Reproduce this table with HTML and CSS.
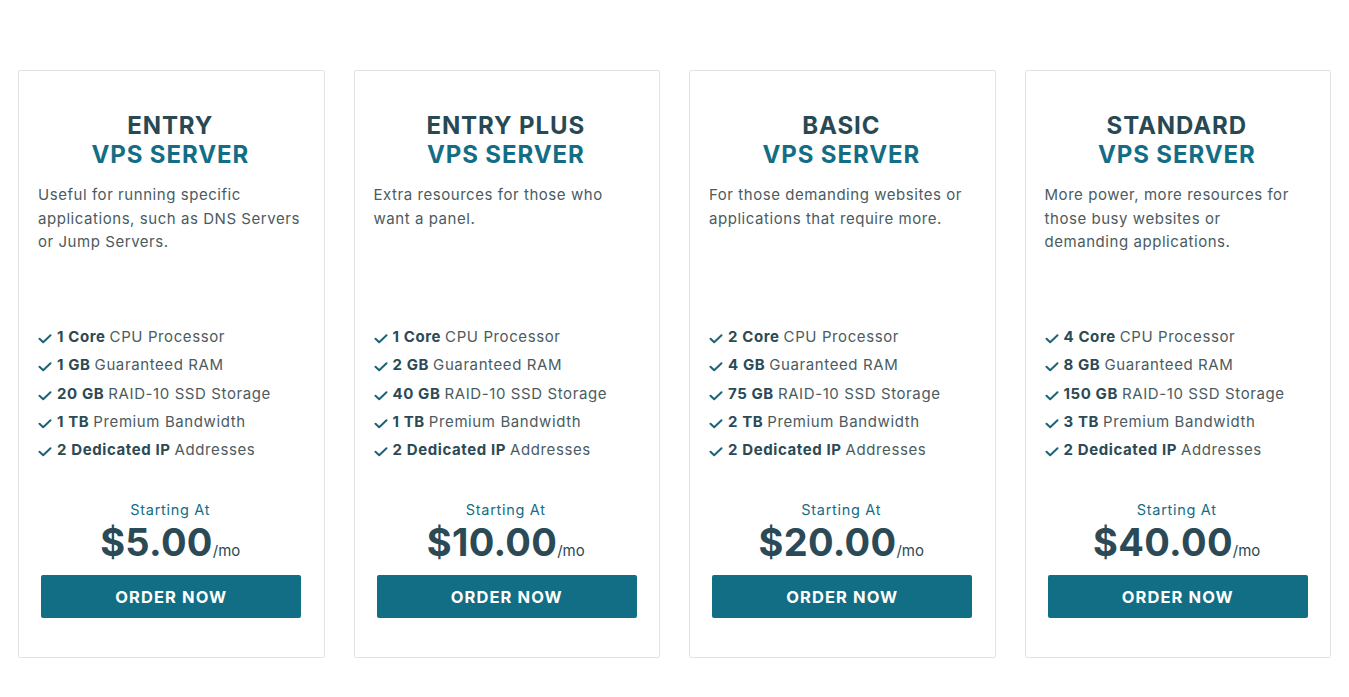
FILE: index.html
```html
<!DOCTYPE html>
<html lang="en">
<head>
<meta charset="utf-8">
<title>VPS Servers</title>
<link rel="stylesheet" href="styles.css">
</head>
<body>
<main class="plans">
  <section class="card">
    <h2 class="title"><span class="name">ENTRY</span><span class="sub">VPS SERVER</span></h2>
    <p class="desc">Useful for running specific applications, such as DNS Servers or Jump Servers.</p>
    <ul class="features">
      <li><svg class="chk" viewBox="0 0 14 10"><path d="M1.5 4.8 5.2 8.3 12.5 1.3"/></svg><b>1 Core</b> CPU Processor</li>
      <li><svg class="chk" viewBox="0 0 14 10"><path d="M1.5 4.8 5.2 8.3 12.5 1.3"/></svg><b>1 GB</b> Guaranteed RAM</li>
      <li><svg class="chk" viewBox="0 0 14 10"><path d="M1.5 4.8 5.2 8.3 12.5 1.3"/></svg><b>20 GB</b> RAID-10 SSD Storage</li>
      <li><svg class="chk" viewBox="0 0 14 10"><path d="M1.5 4.8 5.2 8.3 12.5 1.3"/></svg><b>1 TB</b> Premium Bandwidth</li>
      <li><svg class="chk" viewBox="0 0 14 10"><path d="M1.5 4.8 5.2 8.3 12.5 1.3"/></svg><b>2 Dedicated IP</b> Addresses</li>
    </ul>
    <div class="pricing">
      <div class="starting">Starting At</div>
      <div class="price"><span class="amount">$5.00</span><span class="per">/mo</span></div>
      <a class="order" href="#">ORDER NOW</a>
    </div>
  </section>
  <section class="card">
    <h2 class="title"><span class="name">ENTRY PLUS</span><span class="sub">VPS SERVER</span></h2>
    <p class="desc">Extra resources for those who want a panel.</p>
    <ul class="features">
      <li><svg class="chk" viewBox="0 0 14 10"><path d="M1.5 4.8 5.2 8.3 12.5 1.3"/></svg><b>1 Core</b> CPU Processor</li>
      <li><svg class="chk" viewBox="0 0 14 10"><path d="M1.5 4.8 5.2 8.3 12.5 1.3"/></svg><b>2 GB</b> Guaranteed RAM</li>
      <li><svg class="chk" viewBox="0 0 14 10"><path d="M1.5 4.8 5.2 8.3 12.5 1.3"/></svg><b>40 GB</b> RAID-10 SSD Storage</li>
      <li><svg class="chk" viewBox="0 0 14 10"><path d="M1.5 4.8 5.2 8.3 12.5 1.3"/></svg><b>1 TB</b> Premium Bandwidth</li>
      <li><svg class="chk" viewBox="0 0 14 10"><path d="M1.5 4.8 5.2 8.3 12.5 1.3"/></svg><b>2 Dedicated IP</b> Addresses</li>
    </ul>
    <div class="pricing">
      <div class="starting">Starting At</div>
      <div class="price"><span class="amount">$10.00</span><span class="per">/mo</span></div>
      <a class="order" href="#">ORDER NOW</a>
    </div>
  </section>
  <section class="card">
    <h2 class="title"><span class="name">BASIC</span><span class="sub">VPS SERVER</span></h2>
    <p class="desc">For those demanding websites or applications that require more.</p>
    <ul class="features">
      <li><svg class="chk" viewBox="0 0 14 10"><path d="M1.5 4.8 5.2 8.3 12.5 1.3"/></svg><b>2 Core</b> CPU Processor</li>
      <li><svg class="chk" viewBox="0 0 14 10"><path d="M1.5 4.8 5.2 8.3 12.5 1.3"/></svg><b>4 GB</b> Guaranteed RAM</li>
      <li><svg class="chk" viewBox="0 0 14 10"><path d="M1.5 4.8 5.2 8.3 12.5 1.3"/></svg><b>75 GB</b> RAID-10 SSD Storage</li>
      <li><svg class="chk" viewBox="0 0 14 10"><path d="M1.5 4.8 5.2 8.3 12.5 1.3"/></svg><b>2 TB</b> Premium Bandwidth</li>
      <li><svg class="chk" viewBox="0 0 14 10"><path d="M1.5 4.8 5.2 8.3 12.5 1.3"/></svg><b>2 Dedicated IP</b> Addresses</li>
    </ul>
    <div class="pricing">
      <div class="starting">Starting At</div>
      <div class="price"><span class="amount">$20.00</span><span class="per">/mo</span></div>
      <a class="order" href="#">ORDER NOW</a>
    </div>
  </section>
  <section class="card">
    <h2 class="title"><span class="name">STANDARD</span><span class="sub">VPS SERVER</span></h2>
    <p class="desc">More power, more resources for those busy websites or demanding applications.</p>
    <ul class="features">
      <li><svg class="chk" viewBox="0 0 14 10"><path d="M1.5 4.8 5.2 8.3 12.5 1.3"/></svg><b>4 Core</b> CPU Processor</li>
      <li><svg class="chk" viewBox="0 0 14 10"><path d="M1.5 4.8 5.2 8.3 12.5 1.3"/></svg><b>8 GB</b> Guaranteed RAM</li>
      <li><svg class="chk" viewBox="0 0 14 10"><path d="M1.5 4.8 5.2 8.3 12.5 1.3"/></svg><b>150 GB</b> RAID-10 SSD Storage</li>
      <li><svg class="chk" viewBox="0 0 14 10"><path d="M1.5 4.8 5.2 8.3 12.5 1.3"/></svg><b>3 TB</b> Premium Bandwidth</li>
      <li><svg class="chk" viewBox="0 0 14 10"><path d="M1.5 4.8 5.2 8.3 12.5 1.3"/></svg><b>2 Dedicated IP</b> Addresses</li>
    </ul>
    <div class="pricing">
      <div class="starting">Starting At</div>
      <div class="price"><span class="amount">$40.00</span><span class="per">/mo</span></div>
      <a class="order" href="#">ORDER NOW</a>
    </div>
  </section>
</main>
</body>
</html>
```
FILE: styles.css
```css
* { box-sizing: border-box; }
html, body { margin: 0; padding: 0; background: #fff; }
body {
  font-family: "Inter", "Open Sans", sans-serif;
  color: #4b5b61;
}
.plans {
  display: grid;
  grid-template-columns: repeat(4, 1fr);
  gap: 29px;
  width: 1313px;
  margin: 70px auto 0;
}
.card {
  height: 588px;
  border: 1px solid #e3e3e3;
  border-radius: 2px;
  padding: 40px 21px 39px 19px;
  display: flex;
  flex-direction: column;
}
.title {
  margin: 0;
  text-align: center;
  font-size: 24px;
  line-height: 29px;
  font-weight: 700;
  letter-spacing: 0.9px;
  color: #284954;
  display: flex;
  flex-direction: column;
}
.title .sub { color: #136e85; }
.desc {
  margin: 14px 0 0;
  font-size: 15px;
  line-height: 23.5px;
  letter-spacing: 0.55px;
  height: 140px;
}
.features {
  list-style: none;
  margin: 0;
  padding: 0;
  font-size: 15px;
  line-height: 28.3px;
  letter-spacing: 0.6px;
}
.features li { display: flex; align-items: center; white-space: nowrap; }
.features b { font-weight: 700; color: #2b4a55; margin-right: 4px; }
.chk {
  width: 14px;
  height: 10px;
  margin-right: 5px;
  fill: none;
  stroke: #1d6276;
  stroke-width: 2;
  stroke-linecap: round;
  stroke-linejoin: round;
  flex: none;
  position: relative;
  top: 2px;
}
.pricing {
  margin-top: auto;
  display: flex;
  flex-direction: column;
  align-items: center;
}
.starting {
  color: #136e85;
  font-size: 14.5px;
  line-height: 18px;
  letter-spacing: 0.7px;
}
.price {
  display: flex;
  align-items: baseline;
  color: #2b4a55;
  margin-top: 0;
}
.amount {
  font-size: 38px;
  font-weight: 700;
  line-height: 46px;
  letter-spacing: 0.3px;
}
.per { font-size: 15px; }
.order {
  margin-top: 10px;
  width: 260px;
  height: 43px;
  margin-left: 2px;
  background: #126e84;
  color: #fff;
  text-decoration: none;
  font-weight: 700;
  font-size: 16.5px;
  letter-spacing: 1.1px;
  display: flex;
  align-items: center;
  justify-content: center;
  border-radius: 2px;
}
```
